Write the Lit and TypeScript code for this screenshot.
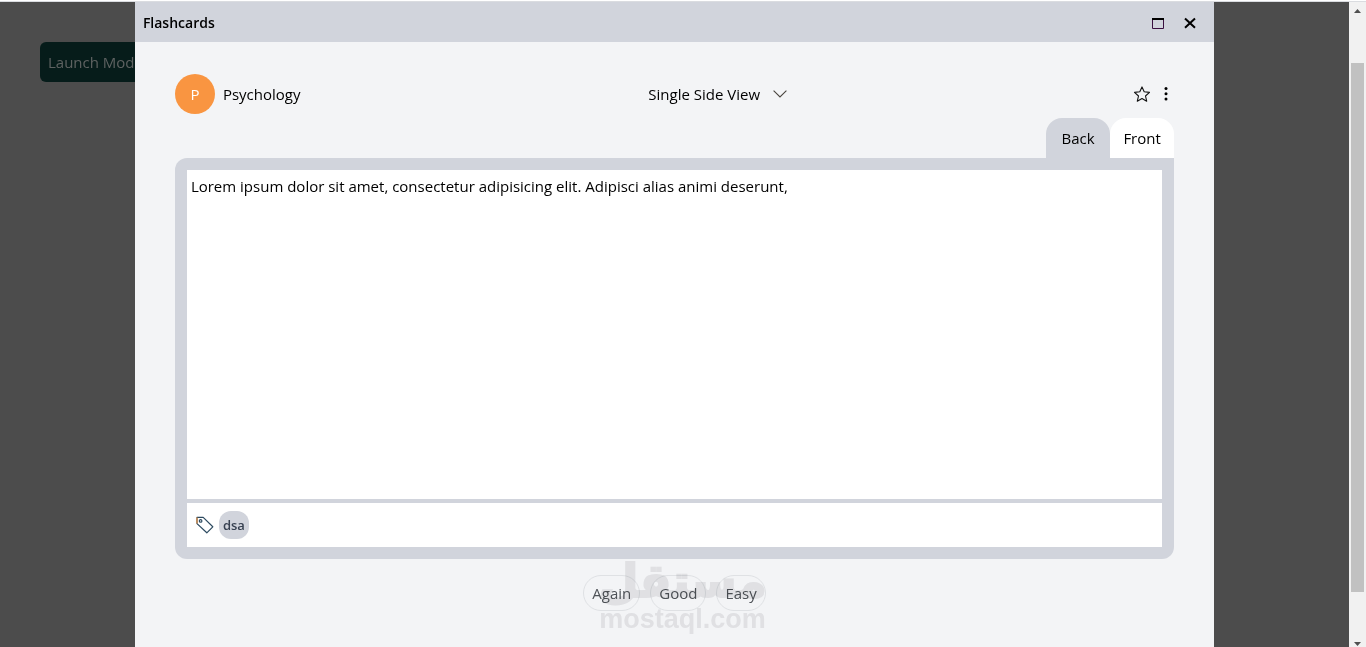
import { LitElement, html, css } from "lit";
import { customElement, state } from "lit/decorators.js";

@customElement("app-root")
export class AppRoot extends LitElement {
  @state() private side: "back" | "front" = "front";

  static styles = css`
    :host {
      display: flex;
      flex-direction: column;
      height: 100vh;
      overflow: hidden;
      background: #ffffff;
      color: #000000;
      font: 400 15px/24px "Open Sans", "Noto Sans", sans-serif;
    }
    * {
      box-sizing: border-box;
    }
    button,
    select {
      margin: 0;
      padding: 0;
      border: 0;
      background: none;
      color: inherit;
      font: inherit;
      cursor: pointer;
    }
    svg {
      display: block;
    }
    .edge {
      flex: none;
      height: 2px;
      border-bottom: 1px solid #dadce0;
    }
    .viewport {
      flex: 1;
      min-height: 0;
      display: flex;
    }
    .page {
      flex: 1;
      position: relative;
      overflow: hidden;
      padding: 40px;
      background: #4c4c4c;
    }
    .launch {
      height: 40px;
      padding: 0 8px;
      border-radius: 6px;
      background: #061c1a;
      color: #5e6261;
    }
    .dialog {
      position: absolute;
      inset: 0 10%;
      display: flex;
      flex-direction: column;
      background: #f3f4f6;
    }
    .titlebar {
      display: flex;
      align-items: center;
      justify-content: space-between;
      height: 40px;
      padding: 2px 16px 0 8px;
      background: #d1d4dc;
    }
    .title {
      margin: 0;
      font-size: 14px;
      font-weight: 600;
      line-height: 24px;
    }
    .actions {
      display: flex;
      align-items: center;
      gap: 16px;
    }
    .body {
      display: flex;
      flex-direction: column;
      padding: 32px 40px;
    }
    .toolbar {
      display: flex;
      align-items: center;
      justify-content: space-between;
    }
    .subject {
      display: flex;
      align-items: center;
      gap: 8px;
    }
    .avatar {
      display: grid;
      place-items: center;
      width: 40px;
      height: 40px;
      border-radius: 50%;
      background: #f99541;
      color: #ffffff;
    }
    .view {
      display: flex;
      align-items: center;
      gap: 12px;
      padding-left: 4px;
    }
    .view select {
      appearance: none;
      outline: none;
    }
    .tools {
      display: flex;
      align-items: center;
    }
    .tabs {
      display: flex;
      justify-content: flex-end;
      margin-top: 4px;
    }
    .tab {
      width: 64px;
      height: 40px;
      border-radius: 16px 16px 0 0;
      background: #ffffff;
    }
    .tab.shaded {
      background: #d1d4dc;
    }
    .card {
      display: flex;
      flex-direction: column;
      gap: 4px;
      padding: 12px;
      border-radius: 12px 0 12px 12px;
      background: #d1d4dc;
    }
    .content {
      min-height: 329px;
      margin: 0;
      padding: 4px;
      background: #ffffff;
    }
    .tags {
      display: flex;
      align-items: center;
      gap: 4px;
      padding: 8px;
      background: #ffffff;
    }
    .tag {
      padding: 0 4px;
      border-radius: 12px;
      background: #d1d4dc;
      color: #374151;
      font-size: 13px;
      font-weight: 600;
      line-height: 28px;
    }
    .grades {
      display: flex;
      justify-content: center;
      gap: 10px;
      margin-top: 16px;
    }
    .grade {
      height: 36px;
      padding: 0 8px;
      border: 1px solid #dfe1e4;
      border-radius: 18px;
      color: #4f5358;
    }
    .mark {
      position: absolute;
      left: 0;
      right: 0;
      bottom: 14px;
      display: flex;
      flex-direction: column;
      align-items: center;
      padding-left: 16px;
      color: #ebebec;
      font-weight: 700;
      mix-blend-mode: multiply;
      pointer-events: none;
    }
    .mark-ar {
      font-family: "DejaVu Sans", sans-serif;
      font-size: 46px;
      line-height: 48px;
      -webkit-text-stroke: 2px #ebebec;
    }
    .mark-en {
      font-family: "Liberation Sans", sans-serif;
      font-size: 27px;
      line-height: 28px;
    }
    .scroll {
      display: flex;
      flex-direction: column;
      align-items: center;
      width: 17px;
      background: #f1f1f1;
    }
    .arrow {
      flex: none;
      width: 17px;
      height: 17px;
    }
    .track {
      flex: 1;
      padding: 44px 0 38px;
      display: flex;
    }
    .thumb {
      width: 13px;
      background: #c1c1c1;
    }
  `;

  private tab(id: "back" | "front", label: string) {
    return html`<button
      class="tab ${this.side === id ? "" : "shaded"}"
      role="tab"
      aria-selected=${this.side === id}
      @click=${() => (this.side = id)}
    >${label}</button>`;
  }

  render() {
    return html`
      <div class="edge"></div>
      <div class="viewport">
        <main class="page">
          <button class="launch">Launch Modal</button>
          <section class="dialog" role="dialog" aria-labelledby="title">
            <header class="titlebar">
              <h1 class="title" id="title">Flashcards</h1>
              <div class="actions">
                <button aria-label="Maximize">
                  <svg width="16" height="16" viewBox="0 0 16 16" fill="none" stroke="#3a1040" stroke-width="1">
                    <path d="M2.500 4v9.500h11V4" />
                    <path d="M2 4h12" stroke="#000" stroke-width="2" />
                  </svg>
                </button>
                <button aria-label="Close">
                  <svg width="16" height="16" viewBox="0 0 16 16" fill="none" stroke="#000" stroke-width="2">
                    <path d="M3 3.500 13 12.800M13 3.500 3 12.800" />
                  </svg>
                </button>
              </div>
            </header>
            <div class="body">
              <div class="toolbar">
                <div class="subject">
                  <span class="avatar">P</span>
                  <span>Psychology</span>
                </div>
                <div class="view">
                  <select aria-label="View">
                    <option>Single Side View</option>
                  </select>
                  <svg width="16" height="16" viewBox="0 0 16 16" fill="none" stroke="#4a453f" stroke-width="1.1">
                    <path d="M1.600 4.600 8 11l6.400-6.400" />
                  </svg>
                </div>
                <div class="tools">
                  <button aria-label="Favourite">
                    <svg width="20" height="20" viewBox="0 0 20 20" fill="none" stroke="#111" stroke-width="1.1" stroke-linejoin="round">
                      <path d="m10 2.9 2.2 4.9 5.3.6-4 3.6 1.200 5.200-4.700-2.700-4.700 2.700 1.200-5.200-4-3.600 5.300-.6z" />
                    </svg>
                  </button>
                  <button aria-label="More">
                    <svg width="22" height="20" viewBox="0 0 22 20" fill="#000">
                      <circle cx="14" cy="4.600" r="1.500" />
                      <circle cx="14" cy="9.800" r="1.500" />
                      <circle cx="14" cy="15" r="1.500" />
                    </svg>
                  </button>
                </div>
              </div>
              <div class="tabs" role="tablist">
                ${this.tab("back", "Back")}${this.tab("front", "Front")}
              </div>
              <div class="card">
                <p class="content">Lorem ipsum dolor sit amet, consectetur adipisicing elit. Adipisci alias animi deserunt,</p>
                <div class="tags">
                  <svg width="20" height="20" viewBox="0 0 20 20" fill="none" stroke="#2c4a60" stroke-width="1.2" stroke-linejoin="round">
                    <path d="M2 2.400h6.200l9.600 9.400-6 6L2 8.600z" />
                    <circle cx="5.600" cy="5.900" r="1.300" />
                    <path d="M2 2.400v6.200" stroke="#e08a3c" />
                  </svg>
                  <span class="tag">dsa</span>
                </div>
              </div>
              <div class="grades">
                <button class="grade">Again</button>
                <button class="grade">Good</button>
                <button class="grade">Easy</button>
              </div>
            </div>
            <div class="mark">
              <span class="mark-ar" lang="ar">مستقل</span>
              <span class="mark-en">mostaql.com</span>
            </div>
          </section>
        </main>
        <div class="scroll">
          <svg class="arrow" viewBox="0 0 17 17" fill="#505050"><path d="M5 11h7L8.500 7z" /></svg>
          <div class="track"><div class="thumb"></div></div>
          <svg class="arrow" viewBox="0 0 17 17" fill="#505050"><path d="M5 12h7l-3.500 4z" /></svg>
        </div>
      </div>
    `;
  }
}
